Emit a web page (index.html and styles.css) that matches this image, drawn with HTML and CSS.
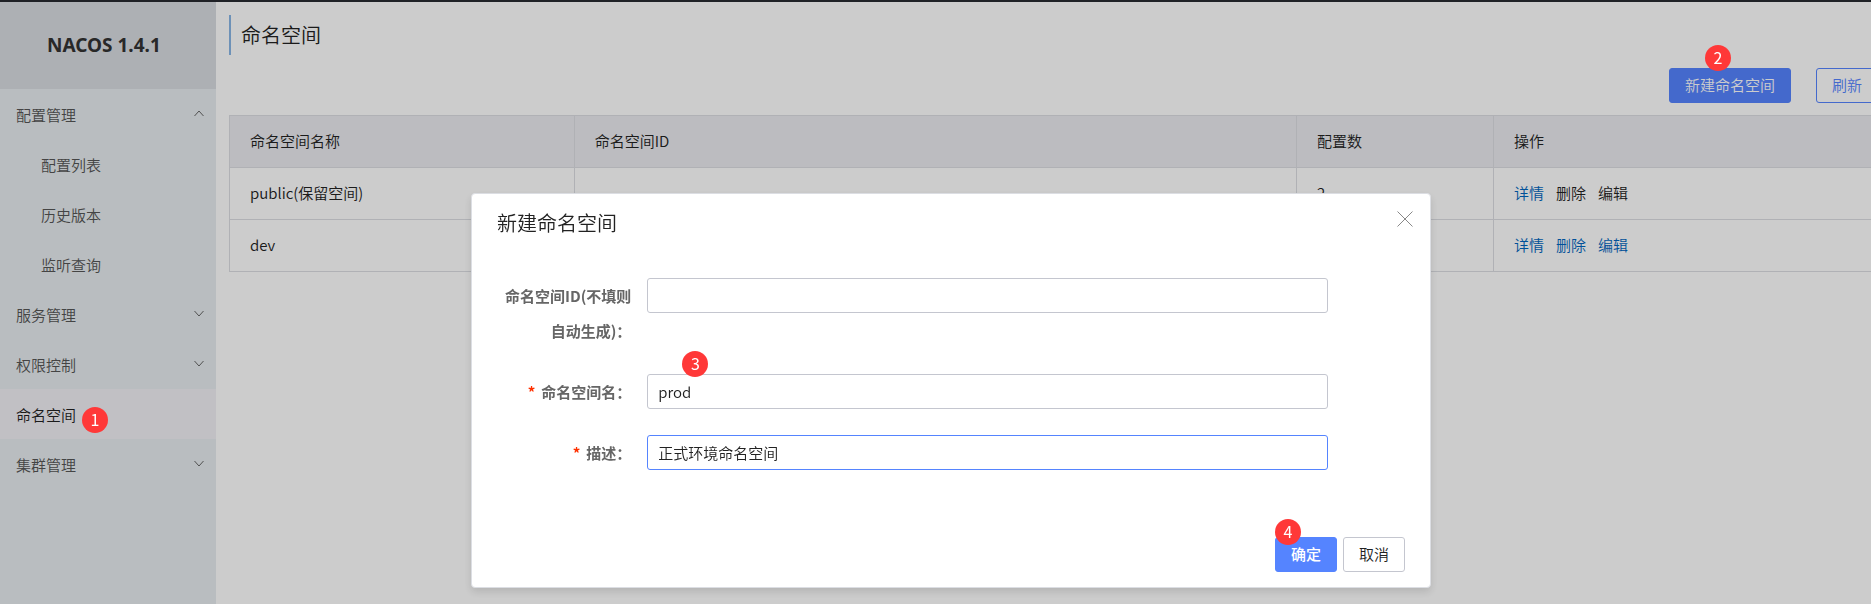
FILE: index.html
```html
<!DOCTYPE html>
<html lang="zh-CN">
<head>
<meta charset="utf-8">
<title>命名空间 - Nacos</title>
<link rel="stylesheet" href="styles.css">
</head>
<body>
<div class="layout">
  <aside class="sidebar">
    <h1 class="brand">NACOS 1.4.1</h1>
    <nav class="menu">
      <a class="item" href="#config">配置管理
        <svg class="arrow" viewBox="0 0 10 7"><path d="M0.5 6L5 1l4.500 5"/></svg></a>
      <a class="item sub" href="#list">配置列表</a>
      <a class="item sub" href="#history">历史版本</a>
      <a class="item sub" href="#listen">监听查询</a>
      <a class="item" href="#service">服务管理
        <svg class="arrow" viewBox="0 0 10 7"><path d="M0.5 1L5 6l4.500-5"/></svg></a>
      <a class="item" href="#auth">权限控制
        <svg class="arrow" viewBox="0 0 10 7"><path d="M0.5 1L5 6l4.500-5"/></svg></a>
      <a class="item active" href="#namespace">命名空间<span class="step step-menu">1</span></a>
      <a class="item" href="#cluster">集群管理
        <svg class="arrow" viewBox="0 0 10 7"><path d="M0.5 1L5 6l4.500-5"/></svg></a>
    </nav>
  </aside>
  <main class="main">
    <h2 class="page-title">命名空间</h2>
    <div class="toolbar">
      <button class="btn primary" type="button">新建命名空间<span class="step step-create">2</span></button>
      <button class="btn outline" type="button">刷新</button>
    </div>
    <table class="table">
      <colgroup><col class="col-name"><col class="col-id"><col class="col-count"><col></colgroup>
      <thead>
        <tr><th>命名空间名称</th><th>命名空间ID</th><th>配置数</th><th>操作</th></tr>
      </thead>
      <tbody>
        <tr><td>public(保留空间)</td><td></td><td>2</td>
          <td><div class="actions"><a href="#detail">详情</a><span>删除</span><span>编辑</span></div></td></tr>
        <tr><td>dev</td><td></td><td></td>
          <td><div class="actions"><a href="#detail">详情</a><a href="#delete">删除</a><a href="#edit">编辑</a></div></td></tr>
      </tbody>
    </table>
  </main>
</div>

<div class="overlay">
  <form class="dialog" role="dialog" aria-labelledby="dialog-title">
    <header class="dialog-head">
      <h3 class="dialog-title" id="dialog-title">新建命名空间</h3>
      <button class="close" type="button" aria-label="关闭">
        <svg class="close-icon" viewBox="0 0 16 16"><path d="M0.500 0.500l15 15M15.500 0.500l-15 15"/></svg>
      </button>
    </header>
    <div class="fields">
      <div class="field">
        <label for="ns-id">命名空间ID(不填则自动生成)：</label>
        <input class="input" id="ns-id" type="text">
      </div>
      <div class="field">
        <label class="required" for="ns-name">命名空间名：</label>
        <div class="control">
          <input class="input" id="ns-name" type="text" value="prod">
          <span class="step step-name">3</span>
        </div>
      </div>
      <div class="field">
        <label class="required" for="ns-desc">描述：</label>
        <input class="input focused" id="ns-desc" type="text" value="正式环境命名空间">
      </div>
    </div>
    <footer class="dialog-foot">
      <button class="btn primary strong" type="button">确定<span class="step step-ok">4</span></button>
      <button class="btn" type="button">取消</button>
    </footer>
  </form>
</div>
</body>
</html>
```
FILE: styles.css
```css
* {
  box-sizing: border-box;
}

html,
body {
  height: 100%;
}

body {
  margin: 0;
  overflow: hidden;
  background: #fff;
  color: #222;
  font: 350 15px/22px "Noto Sans CJK SC", "Noto Sans", sans-serif;
}

button,
input {
  font: inherit;
  color: inherit;
}

a {
  text-decoration: none;
}

.layout {
  display: flex;
  height: 100%;
  border-top: 2px solid #272a30;
}

/* Sidebar */
.sidebar {
  flex: none;
  width: 216px;
  background: #e8edf0;
}

.brand {
  margin: 0;
  padding-left: 47px;
  background: #d9dce2;
  color: #333;
  font: bold 19px/87px "Noto Sans", sans-serif;
}

.menu {
  display: flex;
  flex-direction: column;
}

.item {
  display: flex;
  align-items: center;
  height: 50px;
  padding: 2px 12px 0 16px;
  color: #555;
}

.item.sub {
  padding-left: 41px;
}

.item.active {
  background: #f2f0f6;
  color: #222;
}

.arrow {
  width: 10px;
  height: 7px;
  margin: 0 0 4px auto;
  fill: none;
  stroke: #666;
}

/* Main area */
.main {
  flex: 1;
  min-width: 0;
  padding: 13px 0 0 13px;
}

.page-title {
  margin: 0 0 13px;
  padding-left: 10px;
  border-left: 2px solid #89b6e5;
  font-size: 20px;
  font-weight: inherit;
  line-height: 40px;
}

.toolbar {
  display: flex;
  justify-content: flex-end;
  gap: 25px;
  margin: 0 -7px 12px 0;
}

.btn {
  position: relative;
  height: 35px;
  padding: 0 15px 2px;
  border: 1px solid #c4c6cf;
  border-radius: 3px;
  background: #fff;
}

.btn.primary {
  border-color: #5584ff;
  background: #5584ff;
  color: #fff;
}

.btn.outline {
  border-color: #5584ff;
  color: #5584ff;
}

.btn.strong {
  font-weight: 500;
}

.table {
  width: 100%;
  table-layout: fixed;
  border-collapse: collapse;
}

.col-name {
  width: 21%;
}

.col-id {
  width: 44%;
}

.col-count {
  width: 12%;
}

.table th,
.table td {
  height: 52px;
  padding: 0 20px 2px;
  border: 1px solid #dcdee3;
  border-right: 0;
  text-align: left;
  font-weight: inherit;
}

.table th {
  background: #ebecf0;
}

.actions {
  display: flex;
  gap: 12px;
}

.actions a {
  color: #0066c0;
}

/* Dialog */
.overlay {
  position: fixed;
  inset: 0;
  z-index: 10;
  display: flex;
  justify-content: center;
  align-items: flex-start;
  padding: 193px 0 0 31px;
  background: rgba(0, 0, 0, 0.2);
}

.dialog {
  width: 960px;
  border: 1px solid #dcdee3;
  border-radius: 4px;
  background: #fff;
  box-shadow: 0 4px 8px rgba(0, 0, 0, 0.12);
}

.dialog-head {
  display: flex;
  justify-content: space-between;
  align-items: flex-start;
  padding: 15px 17px 0 25px;
}

.dialog-title {
  margin: 0;
  font-size: 20px;
  font-weight: inherit;
  line-height: 28px;
}

.close {
  display: flex;
  padding: 2px 0;
  border: 0;
  background: none;
}

.close-icon {
  width: 16px;
  height: 16px;
  fill: none;
  stroke: #888;
}

.fields {
  display: flex;
  flex-direction: column;
  gap: 26px;
  padding: 41px 26px 67px 24px;
}

.field {
  display: grid;
  grid-template-columns: 4fr 18fr 2fr;
  align-items: start;
}

.field label {
  padding-right: 16px;
  color: #666;
  font-weight: 700;
  line-height: 35px;
  text-align: right;
}

.required::before {
  content: "*";
  margin-right: 6px;
  color: #ff3000;
}

.control {
  position: relative;
}

.input {
  display: block;
  width: 100%;
  height: 35px;
  padding: 0 10px;
  border: 1px solid #c4c6cf;
  border-radius: 3px;
  background: #fff;
}

.input.focused {
  border-color: #5584ff;
}

.dialog-foot {
  display: flex;
  justify-content: flex-end;
  gap: 6px;
  padding: 0 25px 15px;
}

/* Numbered step markers */
.step {
  position: absolute;
  z-index: 20;
  width: 26px;
  height: 26px;
  border-radius: 50%;
  background: #ff3838;
  color: #fff;
  font: 16px/24px "Noto Sans CJK SC", sans-serif;
  text-align: center;
}

.step-menu {
  top: 407px;
  left: 82px;
}

.step-create {
  top: -24px;
  left: 35px;
}

.step-name {
  top: -23px;
  left: 35px;
}

.step-ok {
  top: -19px;
  left: -1px;
}
```
